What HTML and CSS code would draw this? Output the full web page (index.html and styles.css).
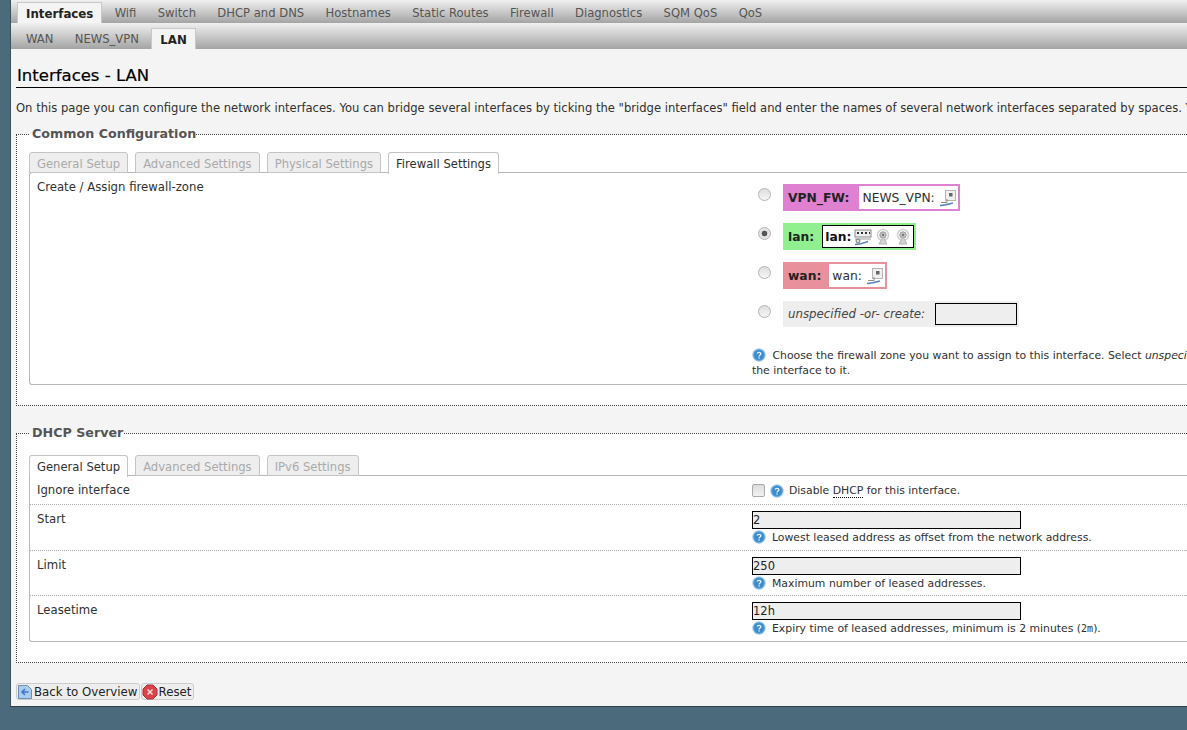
FILE: index.html
```html
<!DOCTYPE html>
<html lang="en">
<head>
<meta charset="utf-8">
<title>Interfaces - LAN</title>
<link rel="stylesheet" href="styles.css">
</head>
<body>
<svg class="defs" width="0" height="0" aria-hidden="true">
  <symbol id="help" viewBox="0 0 14 14">
    <circle cx="7" cy="7" r="6.300" fill="#4a9ad8" stroke="#b7d6ef" stroke-width="1"/>
    <circle cx="7" cy="7" r="4.600" fill="#3d8acb"/>
    <path d="M5.200 5.600C5.400 3.900 8.900 3.900 8.900 5.700C8.900 7 7 6.900 7 8.400" fill="none" stroke="#e8f3fb" stroke-width="1.300"/>
    <rect x="6.400" y="9.300" width="1.300" height="1.300" fill="#e8f3fb"/>
  </symbol>
  <symbol id="tunnel" viewBox="0 0 18 18">
    <rect x="6.500" y="1.500" width="10" height="10" fill="#f0f0f0" stroke="#b5b5b5"/>
    <rect x="10" y="4" width="3.500" height="3.500" fill="#666"/>
    <path d="M8 10v3.500H2" fill="none" stroke="#8a8a8a"/>
    <path d="M1 16.500c4 0 9-1.500 13-2.500" fill="none" stroke="#5a86c0" stroke-width="1.600"/>
  </symbol>
  <symbol id="switch" viewBox="0 0 18 18">
    <rect x="1" y="2" width="16" height="7" fill="#eee" stroke="#8a8a8a"/>
    <path d="M3 4h2v2H3zM7 4h2v2H7zM11 4h2v2h-2zM15 4h1v2h-1z" fill="#333"/>
    <path d="M1 11h16" stroke="#999"/>
    <path d="M1 16.500c4 0 9-1.500 13-3" fill="none" stroke="#5a86c0" stroke-width="1.600"/>
    <circle cx="4" cy="13" r="2" fill="#ddd" stroke="#777"/>
  </symbol>
  <symbol id="wifi" viewBox="0 0 18 18">
    <circle cx="9" cy="7" r="5.500" fill="none" stroke="#d0d0d0" stroke-width="1.500"/>
    <circle cx="9" cy="7" r="3.200" fill="#c4c4c4" stroke="#999"/>
    <circle cx="9" cy="7" r="1.200" fill="#777"/>
    <path d="M9 9l-4 7h8z" fill="#d4d4d4" stroke="#b4b4b4"/>
  </symbol>
  <symbol id="back" viewBox="0 0 16 16">
    <path d="M1.500 1.500h9l4 4v9h-13z" fill="#a9cdf0" stroke="#6d8fb5"/>
    <path d="M11.500 8H5M8 5L5 8l3 3" fill="none" stroke="#3f78c8" stroke-width="1.600"/>
  </symbol>
  <symbol id="reset" viewBox="0 0 16 16">
    <path d="M5 1h6l4 4v6l-4 4H5l-4-4V5z" fill="#d9444c" stroke="#a83238"/>
    <path d="M5.500 5.500l5 5M10.500 5.500l-5 5" stroke="#fbdcdc" stroke-width="1.500"/>
  </symbol>
</svg>

<div class="page">
  <nav class="tabs main-tabs">
    <a class="active">Interfaces</a><a>Wifi</a><a>Switch</a><a>DHCP and DNS</a><a>Hostnames</a><a>Static Routes</a><a>Firewall</a><a>Diagnostics</a><a>SQM QoS</a><a>QoS</a>
  </nav>
  <nav class="tabs sub-tabs">
    <a>WAN</a><a>NEWS_VPN</a><a class="active">LAN</a>
  </nav>

  <main class="content">
    <h2 class="title">Interfaces - LAN</h2>
    <p class="intro">On this page you can configure the network interfaces. You can bridge several interfaces by ticking the "bridge interfaces" field and enter the names of several network interfaces separated by spaces. You can also use VLAN notation.</p>

    <fieldset class="section section-common">
      <legend>Common Configuration</legend>
      <ul class="cfg-tabs">
        <li>General Setup</li><li>Advanced Settings</li><li>Physical Settings</li><li class="on">Firewall Settings</li>
      </ul>
      <div class="panel">
        <div class="row row-zone">
          <label class="row-label">Create / Assign firewall-zone</label>
          <div class="row-field">
            <div class="zones">
              <div class="zone">
                <span class="radio"></span>
                <div class="zone-box vpn"><b>VPN_FW:</b><span class="zone-ifs"><span>NEWS_VPN:</span><svg class="ico18"><use href="#tunnel"/></svg></span></div>
              </div>
              <div class="zone">
                <span class="radio checked"></span>
                <div class="zone-box lan"><b>lan:</b><span class="zone-ifs current"><b>lan:</b><svg class="ico18"><use href="#switch"/></svg><svg class="ico18"><use href="#wifi"/></svg><svg class="ico18"><use href="#wifi"/></svg></span></div>
              </div>
              <div class="zone">
                <span class="radio"></span>
                <div class="zone-box wan"><b>wan:</b><span class="zone-ifs"><span>wan:</span><svg class="ico18"><use href="#tunnel"/></svg></span></div>
              </div>
              <div class="zone">
                <span class="radio"></span>
                <div class="zone-box none"><i>unspecified -or- create:</i><span class="zone-input"></span></div>
              </div>
            </div>
            <div class="help help-zone"><svg class="ico14"><use href="#help"/></svg> Choose the firewall zone you want to assign to this interface. Select <i>unspecified</i> to remove the interface from the associated zone or fill out the <i>create</i> field to define a new zone and attach<br>the interface to it.</div>
          </div>
        </div>
      </div>
    </fieldset>

    <fieldset class="section section-dhcp">
      <legend>DHCP Server</legend>
      <ul class="cfg-tabs">
        <li class="on">General Setup</li><li>Advanced Settings</li><li>IPv6 Settings</li>
      </ul>
      <div class="panel">
        <div class="row row-ignore">
          <label class="row-label">Ignore interface</label>
          <div class="row-field ignore-field"><span class="check"></span><svg class="ico14"><use href="#help"/></svg><span>Disable <abbr>DHCP</abbr> for this interface.</span></div>
        </div>
        <div class="row">
          <label class="row-label">Start</label>
          <div class="row-field"><div class="text-input">2</div><div class="help"><svg class="ico14"><use href="#help"/></svg><span>Lowest leased address as offset from the network address.</span></div></div>
        </div>
        <div class="row row-limit">
          <label class="row-label">Limit</label>
          <div class="row-field"><div class="text-input">250</div><div class="help"><svg class="ico14"><use href="#help"/></svg><span>Maximum number of leased addresses.</span></div></div>
        </div>
        <div class="row">
          <label class="row-label">Leasetime</label>
          <div class="row-field"><div class="text-input">12h</div><div class="help"><svg class="ico14"><use href="#help"/></svg><span>Expiry time of leased addresses, minimum is 2 minutes (<code>2m</code>).</span></div></div>
        </div>
      </div>
    </fieldset>

    <div class="actions">
      <button class="btn" type="button"><svg class="ico16"><use href="#back"/></svg>Back to Overview</button>
      <button class="btn" type="button"><svg class="ico16"><use href="#reset"/></svg>Reset</button>
    </div>
  </main>
</div>
</body>
</html>
```

FILE: styles.css
```css
* { box-sizing: border-box; }
html, body { margin: 0; padding: 0; height: 730px; overflow: hidden; }
body {
  background: #4b6b7d;
  font-family: "DejaVu Sans", Verdana, sans-serif;
  font-size: 11.6px;
  color: #303030;
}
.defs { position: absolute; }
.page {
  margin-left: 10px;
  width: 1500px;
  height: 707px;
  background: #f4f4f4;
  border-bottom: 1px solid #333f47;
  border-left: 1px solid #39505e;
}
.tabs {
  display: flex;
  align-items: flex-end;
  background: linear-gradient(#f0f0f0, #a4a4a4);
  font-size: 11.6px;
  color: #555;
}
.tabs a { display: block; padding: 0 9px; white-space: nowrap; }
.main-tabs { height: 23px; padding-left: 6px; gap: 3.300px; }
.main-tabs a { line-height: 22px; height: 21px; }
.sub-tabs { height: 26px; padding-left: 6px; gap: 3.300px; }
.sub-tabs a { line-height: 22px; height: 21px; }
.tabs a.active {
  background: #f4f4f4;
  color: #222;
  font-size: 11.8px;
  font-weight: bold;
  border: 1px solid #c8c8c8;
  border-bottom: 0;
  padding: 0 8px;
}
.content { padding: 17px 5px 0; }
.title {
  margin: 0;
  font-size: 16.500px;
  font-weight: normal;
  -webkit-text-stroke: 0.2px #000;
  color: #000;
  height: 22px;
  line-height: 20px;
  border-bottom: 1px solid #000;
  padding-left: 1px;
}
.intro {
  margin: 12px 0 0;
  font-size: 11.580px;
  height: 16px;
  line-height: 16px;
  white-space: nowrap;
  overflow: hidden;
}
.section {
  margin: 10px 0 0;
  padding: 0 0 0 12px;
  background: #fff;
  border: 1px dotted #444;
  border-right: 0;
  min-width: 0;
}
.section-common { height: 280px; }
.section-dhcp { height: 238px; margin-top: 19px; }
.section legend {
  margin-left: 1px;
  padding: 0 0 0 2px;
  font-size: 12.700px;
  line-height: 16px;
  font-weight: bold;
  color: #555;
}
.cfg-tabs {
  list-style: none;
  margin: 10px 0 0;
  padding: 0;
  display: flex;
  gap: 7px;
  height: 21px;
  position: relative;
  z-index: 1;
}
.section-dhcp .cfg-tabs { margin-top: 14px; }
.cfg-tabs li {
  height: 21px;
  padding: 0 7px;
  line-height: 22px;
  background: #eee;
  color: #aaa;
  border: 1px solid #c4c4c4;
  border-radius: 3px 3px 0 0;
  white-space: nowrap;
}
.cfg-tabs li.on {
  background: #fff;
  color: #303030;
  height: 22px;
  border-bottom: 0;
}
.panel {
  margin-top: -1px;
  border: 1px solid #b8b8b8;
  border-right: 0;
  border-radius: 3px 0 0 3px;
}
.row {
  display: flex;
  height: 46px;
  border-top: 1px dotted #aaa;
}
.row:first-child { border-top: 0; }
.row-ignore { height: 28px; }
.row-limit { height: 45px; }
.row-zone { height: 211px; }
.row-label { width: 722px; flex: none; padding: 6px 0 0 7px; line-height: 16px; font-size: 11.700px; }
.row-field { flex: 1; padding-top: 6px; }
.ignore-field { display: flex; align-items: center; gap: 5px; padding: 1px 0 0; height: 28px; font-size: 10.850px; }
.row-zone .row-field { padding-top: 5px; }
.zones { display: flex; flex-direction: column; gap: 12px; padding-top: 6px; }
.zone { display: flex; align-items: flex-start; }
.radio {
  width: 13px;
  height: 13px;
  margin: 4px 12px 0 6px;
  border-radius: 50%;
  border: 1px solid #b4b4b4;
  background: linear-gradient(#dedede, #f6f6f6);
}
.radio.checked { background: radial-gradient(circle, #555 0 2.500px, #e4e4e4 3.200px); }
.zone-box {
  display: inline-flex;
  align-items: center;
  height: 27px;
  padding: 2px;
  color: #222;
  font-size: 12.300px;
}
.zone-box > b { padding: 0 8px 0 3px; }
.vpn.zone-box > b { padding-right: 10px; }
.zone-ifs {
  display: inline-flex;
  align-items: center;
  gap: 2px;
  height: 23px;
  padding: 0 1px 0 3px;
  background: #fff;
  font-size: 12.300px;
  color: #303030;
}
.zone-ifs > span { margin-right: 2px; }
.zone-ifs b { color: #111; margin-right: 1px; }
.zone-ifs.current { border: 1px solid #000; padding-left: 2px; }
.vpn { background: #e080d0; }
.lan { background: #90f090; }
.wan { background: #e8909c; }
.none { background: #eee; height: 26px; width: 236px; justify-content: space-between; font-size: 11.800px; }
.none i { padding-left: 3px; color: #444; }
.zone-input { width: 82px; height: 22px; background: #eee; border: 1px solid #000; }
.ico18 { width: 18px; height: 18px; flex: none; }
.ico14 { width: 14px; height: 14px; flex: none; }
.ico16 { width: 16px; height: 16px; flex: none; }
.help { display: flex; gap: 6px; line-height: 15px; font-size: 10.850px; white-space: nowrap; margin-top: 1px; color: #303030; }
.help-zone { display: block; margin-top: 21px; }
.help-zone .ico14 { vertical-align: -3px; margin-right: 3px; }
abbr { border-bottom: 1px dotted #000; }
code { font-family: "DejaVu Sans Mono", monospace; font-size: 10px; }
.check {
  width: 13px;
  height: 13px;
  border: 1px solid #aaa;
  border-radius: 2px;
  background: linear-gradient(#dcdcdc, #f2f2f2);
}
.text-input {
  width: 269px;
  height: 18px;
  background: #eee;
  border: 1px solid #000;
  font-size: 11.500px;
  line-height: 16px;
  color: #222;
}
.actions { display: flex; gap: 1px; margin-top: 20px; }
.btn {
  display: inline-flex;
  align-items: center;
  gap: 1px;
  height: 17px;
  padding: 0 1px 0 0;
  border: 1px solid #ccc;
  border-radius: 3px;
  background: #eee;
  font: 11.800px "DejaVu Sans", sans-serif;
  color: #222;
}
```
